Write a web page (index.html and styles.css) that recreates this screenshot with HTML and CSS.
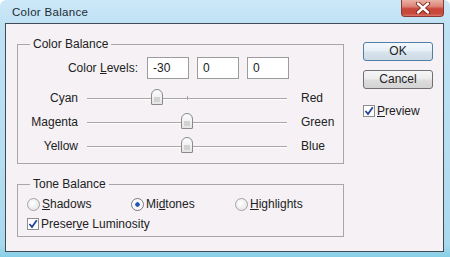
FILE: index.html
```html
<!DOCTYPE html>
<html>
<head>
<meta charset="utf-8">
<link rel="stylesheet" href="styles.css">
</head>
<body>
<div class="window">
  <div class="titlebar">
    <span class="title">Color Balance</span>
    <div class="close">
      <svg width="16" height="12" viewBox="0 0 16 12">
        <path d="M3 1.5 L13 10.5 M13 1.5 L3 10.5" stroke="#7a1f16" stroke-width="4.2" stroke-linecap="round" fill="none"/>
        <path d="M3 1.5 L13 10.5 M13 1.5 L3 10.5" stroke="#ffffff" stroke-width="2.4" stroke-linecap="round" fill="none"/>
      </svg>
    </div>
  </div>
  <div class="client">
    <div class="left">
      <fieldset class="group g1">
        <legend>Color Balance</legend>
        <div class="levels">
          <span class="levels-label">Color <u>L</u>evels:</span>
          <span class="field">-30</span>
          <span class="field">0</span>
          <span class="field">0</span>
        </div>
        <div class="slider-row">
          <span class="sl-left">Cyan</span>
          <div class="track"><span class="tick"></span><span class="thumb" style="left:64px"></span></div>
          <span class="sl-right">Red</span>
        </div>
        <div class="slider-row">
          <span class="sl-left">Magenta</span>
          <div class="track"><span class="tick"></span><span class="thumb" style="left:94px"></span></div>
          <span class="sl-right">Green</span>
        </div>
        <div class="slider-row">
          <span class="sl-left">Yellow</span>
          <div class="track"><span class="tick"></span><span class="thumb" style="left:94px"></span></div>
          <span class="sl-right">Blue</span>
        </div>
      </fieldset>
      <fieldset class="group g2">
        <legend>Tone Balance</legend>
        <div class="radios">
          <span class="opt"><span class="radio"></span><span><u>S</u>hadows</span></span>
          <span class="opt"><span class="radio on"></span><span>Mi<u>d</u>tones</span></span>
          <span class="opt"><span class="radio"></span><span><u>H</u>ighlights</span></span>
        </div>
        <div class="check-row lum">
          <span class="checkbox"><svg width="10" height="10" viewBox="0 0 10 10"><path d="M1.5 5 L4 8 L8.8 1.2" stroke="#22449a" stroke-width="1.8" fill="none"/></svg></span>
          <span>Preser<u>v</u>e Luminosity</span>
        </div>
      </fieldset>
    </div>
    <div class="right">
      <div class="btn default">OK</div>
      <div class="btn">Cancel</div>
      <div class="check-row preview">
        <span class="checkbox"><svg width="10" height="10" viewBox="0 0 10 10"><path d="M1.5 5 L4 8 L8.8 1.2" stroke="#22449a" stroke-width="1.8" fill="none"/></svg></span>
        <span><u>P</u>review</span>
      </div>
    </div>
  </div>
</div>
</body>
</html>
```

FILE: styles.css
```css
html, body {
  margin: 0;
  padding: 0;
  background: #ffffff;
}
body {
  width: 450px;
  height: 257px;
  overflow: hidden;
  font-family: "Liberation Sans", Arial, sans-serif;
  font-size: 12px;
  color: #222222;
}
.window {
  width: 450px;
  height: 257px;
  box-sizing: border-box;
  padding: 0 6px 5px 5px;
  display: flex;
  flex-direction: column;
  background: linear-gradient(180deg, #cde8f8 0%, #bfe1f4 10%, #b7ddf1 60%, #a9d9ee 95%, #86cfe6 100%);
  border-radius: 6px 6px 0 0;
}
.titlebar {
  height: 23px;
  flex: none;
  display: flex;
  align-items: flex-start;
  justify-content: space-between;
}
.title {
  margin: 5px 0 0 7px;
  font-size: 11.5px;
  letter-spacing: 0.3px;
  color: #1c2a33;
  line-height: 14px;
}
.close {
  width: 43px;
  height: 17px;
  box-sizing: border-box;
  border: 1px solid #8a3a33;
  border-top: none;
  border-radius: 0 0 4px 4px;
  background: linear-gradient(180deg, #e9b2a6 0%, #dc8577 40%, #c8473a 55%, #c84a3c 85%, #d9786b 100%);
  display: flex;
  align-items: center;
  justify-content: center;
}
.client {
  flex: 1;
  border: 1px solid #3f4c55;
  background: #f5f1f5;
  display: flex;
  align-items: flex-start;
  padding: 13px 0 0 11px;
}
.left {
  width: 327px;
  display: flex;
  flex-direction: column;
}
.group {
  margin: 0;
  padding: 0;
  border: 1px solid #a9a6aa;
  box-sizing: border-box;
  min-width: 0;
}
.group legend {
  margin-left: 12px;
  padding: 0 3px;
  line-height: 14px;
  height: 14px;
}
.g1 {
  height: 127px;
}
.g2 {
  height: 60px;
  margin-top: 13px;
}
.levels {
  display: flex;
  align-items: center;
  margin-top: 6px;
  height: 22px;
}
.levels-label {
  width: 120px;
  text-align: right;
  margin-right: 9px;
}
.field {
  width: 42px;
  height: 22px;
  box-sizing: border-box;
  border: 1px solid #9c9c9c;
  background: #ffffff;
  padding-left: 5px;
  line-height: 20px;
  margin-right: 8px;
}
.slider-row {
  display: flex;
  align-items: center;
  height: 24px;
}
.levels + .slider-row {
  margin-top: 7px;
}
.sl-left {
  width: 60px;
  text-align: right;
}
.track {
  position: relative;
  width: 200px;
  height: 1px;
  margin-left: 9px;
  background: #a8a8a8;
  box-shadow: 0 1px 0 #ffffff;
}
.tick {
  position: absolute;
  left: 100px;
  top: -2px;
  width: 1px;
  height: 4px;
  background: #a8a8a8;
}
.thumb {
  position: absolute;
  top: -9px;
  width: 12px;
  height: 16px;
  box-sizing: border-box;
  border: 1px solid #8a8a8a;
  border-radius: 6px 6px 1px 1px;
  background: linear-gradient(180deg, #fdfdfd 0%, #f1f1f1 50%, #e4e4e4 100%);
}
.thumb::after {
  content: "";
  position: absolute;
  left: 2px;
  top: 7px;
  width: 6px;
  height: 5px;
  background: #d2d2d2;
}
.sl-right {
  margin-left: 14px;
}
.radios {
  display: flex;
  align-items: center;
  height: 18px;
  margin-top: 4px;
  padding-left: 9px;
}
.opt {
  display: flex;
  align-items: center;
  gap: 2px;
  width: 104px;
}
.radio {
  width: 13px;
  height: 13px;
  box-sizing: border-box;
  border-radius: 50%;
  border: 1px solid #a3a3a3;
  background: radial-gradient(circle at 40% 40%, #ffffff 0%, #ececec 60%, #dcdcdc 100%);
}
.radio.on {
  border-color: #7b7b7b;
  background: radial-gradient(circle at 50% 50%, #1f57b8 0%, #1f57b8 25%, #f2f2f2 32%, #ffffff 70%, #e6e6e6 100%);
}
.check-row {
  display: flex;
  align-items: center;
  gap: 2px;
  height: 18px;
}
.lum {
  padding-left: 9px;
  margin-top: 2px;
}
.checkbox {
  width: 12px;
  height: 12px;
  box-sizing: border-box;
  border: 1px solid #8d8d8d;
  background: #ffffff;
  display: flex;
  align-items: center;
  justify-content: center;
}
.right {
  margin-left: 19px;
  display: flex;
  flex-direction: column;
  width: 70px;
}
.btn {
  height: 19px;
  width: 70px;
  box-sizing: border-box;
  border: 1px solid #707070;
  border-radius: 3px;
  background: linear-gradient(180deg, #f6f6f6 0%, #ececec 48%, #dedede 52%, #d3d3d3 100%);
  text-align: center;
  line-height: 17px;
  margin-top: 9px;
}
.btn.default {
  margin-top: 5px;
  border-color: #4f7fa5;
  background: linear-gradient(180deg, #f3f8fc 0%, #e6eff6 48%, #d7e4ee 52%, #cddbe6 100%);
}
.preview {
  margin-top: 14px;
  height: 16px;
}
```
